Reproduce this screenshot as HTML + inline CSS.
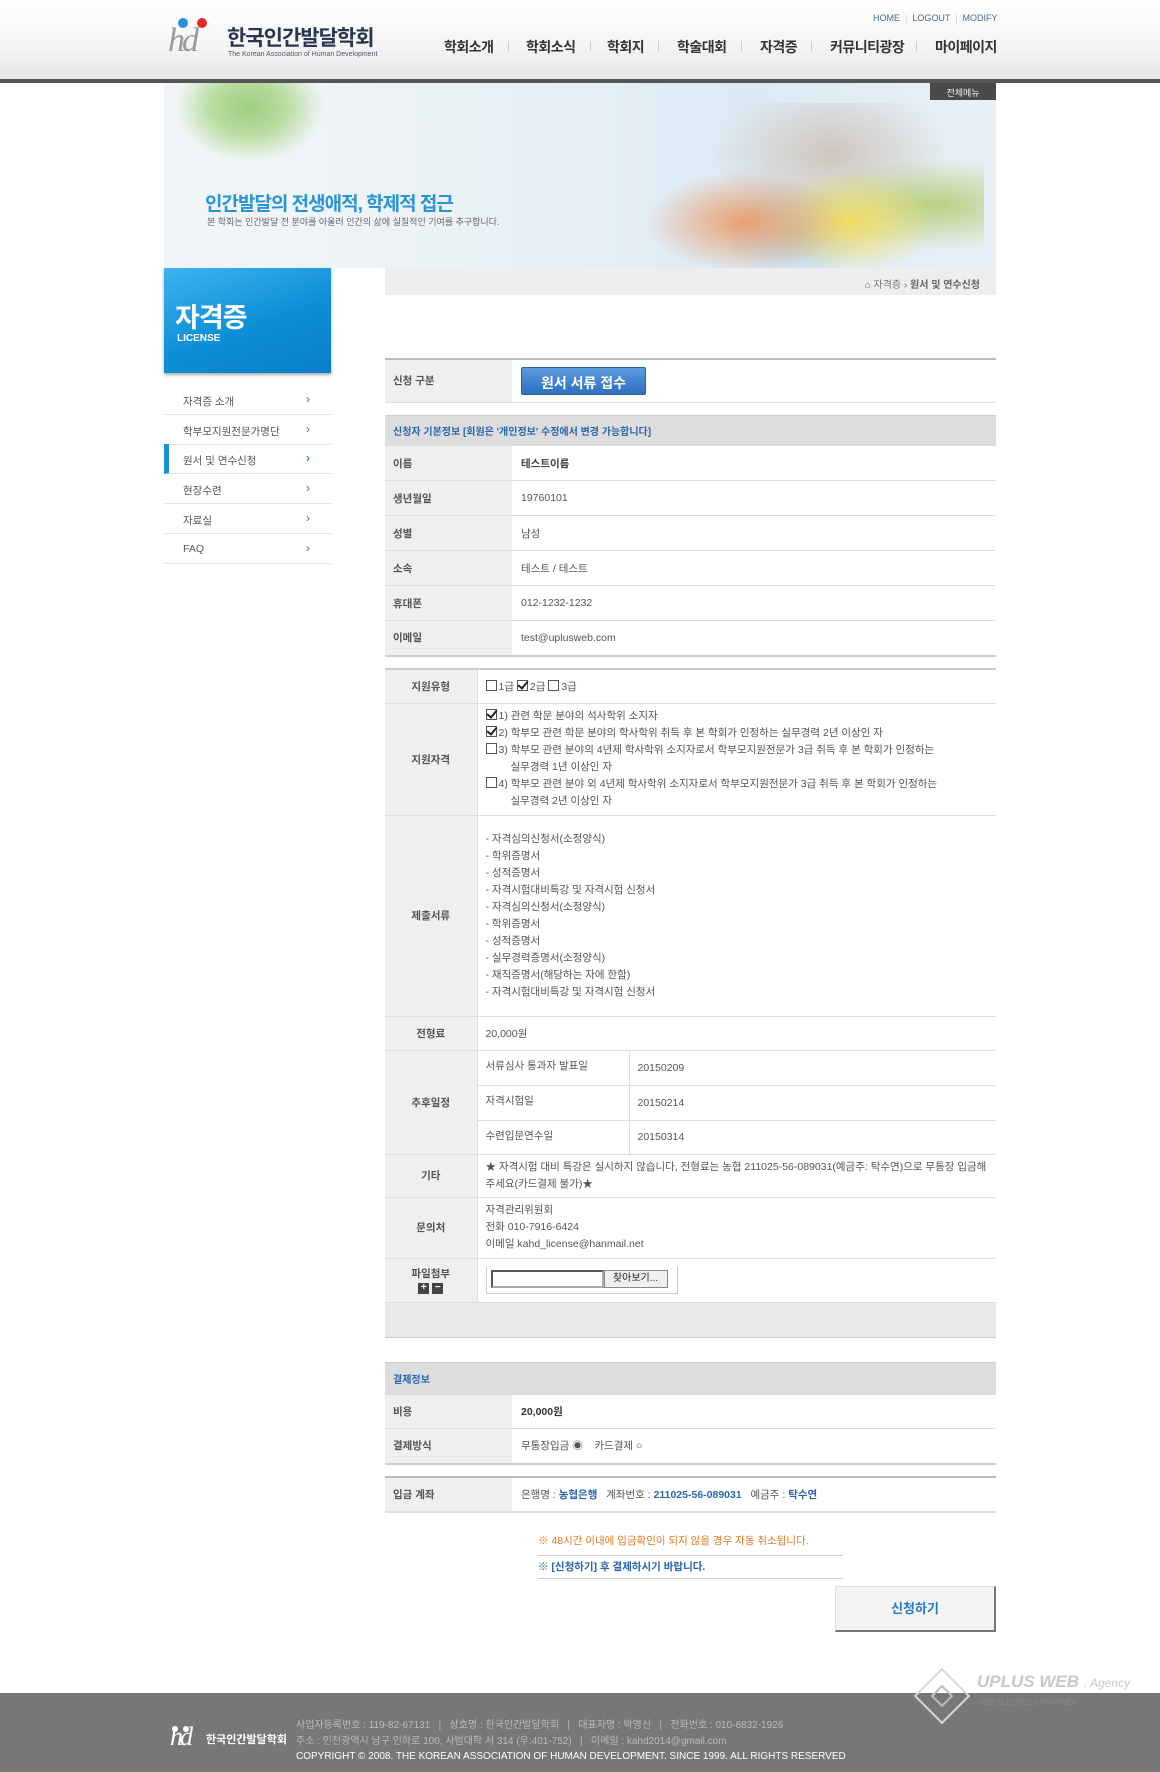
<!DOCTYPE html>
<html><head><meta charset="utf-8">
<style>
*{margin:0;padding:0;box-sizing:border-box}
body{width:1160px;height:1772px;position:relative;background:#fff;font-family:"Liberation Sans","Noto Sans CJK KR",sans-serif;font-size:10.5px;color:#555;overflow:hidden}
.a{position:absolute}
.hdr{left:0;top:0;width:1160px;height:79px;background:linear-gradient(#fff,#f4f4f4 60%,#e6e6e6)}
.line{left:0;top:79px;width:1160px;height:4px;background:#555}
.nav{top:37px;font-size:14px;color:#333;font-weight:bold;letter-spacing:-0.5px}
.sep{top:41px;width:1px;height:10px;background:#ccc}
.top{top:13px;font-size:9px;color:#4a6a9a}
.banner{left:164px;top:83px;width:832px;height:185px;background:linear-gradient(90deg,#f3f6f8,#e9f1f6 40%,#dceaf4 70%,#e8f0f5);overflow:hidden}
.side{left:164px;top:268px;width:167px;height:105px;background:linear-gradient(160deg,#3fb3f0,#0d8fd6 55%,#0a7ecb);box-shadow:0 2px 3px #aaa}
.mi{left:164px;width:167px;height:30px;border-bottom:1px solid #e3e3e3;font-size:10.5px;color:#555;padding:9px 0 0 19px}
.mi b{position:absolute;right:21px;top:7px;font-weight:normal;color:#666;font-size:12px}
.bc{left:385px;top:268px;width:611px;height:27px;background:#eee}
.lbl{background:#efefef;font-weight:bold;color:#555}
table{border-collapse:collapse;position:absolute;left:385px;width:611px}
td{border-bottom:1px solid #ddd;font-size:10.5px;color:#555;vertical-align:middle}
.t2 td.l{background:#efefef;font-weight:bold;text-align:center;width:92px;border-right:1px solid #ddd}
.t2 td{padding-left:8px}
.t2 td.l{padding-left:0}
.cb{display:inline-block;width:11px;height:11px;border:1px solid #555;vertical-align:-1px;margin-right:2px;position:relative;background:#fff}
.ck:after{content:"";position:absolute;left:2px;top:-2px;width:4px;height:8px;border:solid #222;border-width:0 2px 2px 0;transform:rotate(40deg)}
</style></head><body>
<div class="a hdr"></div>
<div class="a line"></div>
<div class="a" style="left:178px;top:18px;width:10px;height:10px;border-radius:50%;background:#2a90d8"></div>
<div class="a" style="left:197px;top:18px;width:10px;height:10px;border-radius:50%;background:#e02a2a"></div>
<div class="a" style="left:168px;top:22px;font-size:34px;font-style:italic;color:#9a9a9a;font-family:'Liberation Serif',serif;letter-spacing:-3px">hd</div>
<div class="a" style="left:227px;top:22px;font-size:21px;font-weight:bold;color:#2b3550;letter-spacing:-1px">한국인간발달학회</div>
<div class="a" style="left:228px;top:51px;font-size:7px;color:#556">The Korean Association of Human Development</div>
<div class="a top" style="left:873px">HOME &nbsp;<span style="color:#ccc">|</span>&nbsp; LOGOUT &nbsp;<span style="color:#ccc">|</span>&nbsp; MODIFY</div>
<div class="a nav" style="left:444px">학회소개</div><div class="a sep" style="left:508px"></div>
<div class="a nav" style="left:526px">학회소식</div><div class="a sep" style="left:590px"></div>
<div class="a nav" style="left:607px">학회지</div><div class="a sep" style="left:658px"></div>
<div class="a nav" style="left:677px">학술대회</div><div class="a sep" style="left:741px"></div>
<div class="a nav" style="left:760px">자격증</div><div class="a sep" style="left:811px"></div>
<div class="a nav" style="left:830px">커뮤니티광장</div><div class="a sep" style="left:916px"></div>
<div class="a nav" style="left:935px">마이페이지</div>
<div class="a banner">
 <div class="a" style="left:10px;top:0;width:150px;height:80px;background:radial-gradient(ellipse at 50% 30%,#9fcf7f 0,#b9dca0 35%,rgba(255,255,255,0) 70%)"></div>
 <div class="a" style="left:480px;top:20px;width:340px;height:170px;background:radial-gradient(ellipse at 30% 70%,#e9a070 0,rgba(233,160,112,0) 30%),radial-gradient(ellipse at 60% 70%,#f0dc60 0,rgba(240,220,96,0) 30%),radial-gradient(ellipse at 85% 60%,#b8d080 0,rgba(184,208,128,0) 32%),radial-gradient(ellipse at 45% 75%,#a9cbe6 0,rgba(169,203,230,0) 28%),radial-gradient(ellipse at 55% 30%,#cfc6bd 0,rgba(207,198,189,0) 45%)"></div>
 <div class="a" style="left:766px;top:0;width:66px;height:17px;background:#4a4a4a;color:#eee;font-size:9px;text-align:center;padding-top:3px">전체메뉴</div>
 <div class="a" style="left:41px;top:106px;font-size:19px;font-weight:bold;color:#2a95d6;letter-spacing:-1px">인간발달의 전생애적, 학제적 접근</div>
 <div class="a" style="left:43px;top:132px;font-size:9px;color:#666">본 학회는 인간발달 전 분야를 아울러 인간의 삶에 실질적인 기여를 추구합니다.</div>
</div>
<div class="a side">
 <div class="a" style="left:11px;top:28px;font-size:27px;font-weight:bold;color:#fff;letter-spacing:-1px">자격증</div>
 <div class="a" style="left:13px;top:65px;font-size:10px;font-weight:bold;color:#fff">LICENSE</div>
</div>
<div class="a mi" style="top:385px">자격증 소개<b>›</b></div>
<div class="a mi" style="top:415px">학부모지원전문가명단<b>›</b></div>
<div class="a mi" style="top:444px;border-left:5px solid #1a8ed8;padding-left:14px">원서 및 연수신청<b style="color:#1a8ed8;font-weight:bold">›</b></div>
<div class="a mi" style="top:474px">현장수련<b>›</b></div>
<div class="a mi" style="top:504px">자료실<b>›</b></div>
<div class="a mi" style="top:534px">FAQ<b>›</b></div>
<div class="a bc"><div class="a" style="right:16px;top:8px;font-size:10px;color:#777">⌂ 자격증 › <b style="color:#666">원서 및 연수신청</b></div></div>
<table style="top:358px;border-top:2px solid #bbb">
<tr style="height:43px"><td class="lbl" style="width:127px;padding-left:8px">신청 구분</td><td style="padding-left:9px"><span style="display:inline-block;width:125px;height:28px;background:linear-gradient(#5a9be0,#2e6fc0);border:1px solid #2a5fa8;border-radius:2px;color:#fff;font-size:14px;font-weight:bold;text-align:center;padding-top:5px">원서 서류 접수</span></td></tr>
</table>
<table style="top:415px">
<tr style="height:30px;background:#ddd"><td colspan="2" style="padding-left:8px;color:#2a66b0;font-weight:bold;font-size:10px;border-top:1px solid #ccc">신청자 기본정보 [회원은 '개인정보' 수정에서 변경 가능합니다]</td></tr>
<tr style="height:35px"><td class="lbl" style="width:127px;padding-left:8px">이름</td><td style="padding-left:9px;font-weight:bold;color:#444">테스트이름</td></tr>
<tr style="height:35px"><td class="lbl" style="padding-left:8px">생년월일</td><td style="padding-left:9px">19760101</td></tr>
<tr style="height:35px"><td class="lbl" style="padding-left:8px">성별</td><td style="padding-left:9px">남성</td></tr>
<tr style="height:35px"><td class="lbl" style="padding-left:8px">소속</td><td style="padding-left:9px">테스트 / 테스트</td></tr>
<tr style="height:35px"><td class="lbl" style="padding-left:8px">휴대폰</td><td style="padding-left:9px">012-1232-1232</td></tr>
<tr style="height:35px"><td class="lbl" style="padding-left:8px;border-bottom:2px solid #ccc">이메일</td><td style="padding-left:9px;border-bottom:2px solid #ccc">test@uplusweb.com</td></tr>
</table>
<table class="t2" style="top:668px;border-top:2px solid #ccc">
<tr style="height:34px"><td class="l">지원유형</td><td><span class="cb"></span>1급 <span class="cb ck"></span>2급 <span class="cb"></span>3급</td></tr>
<tr style="height:112px"><td class="l">지원자격</td><td style="line-height:17px">
<span class="cb ck"></span>1) 관련 학문 분야의 석사학위 소지자<br>
<span class="cb ck"></span>2) 학부모 관련 학문 분야의 학사학위 취득 후 본 학회가 인정하는 실무경력 2년 이상인 자<br>
<span class="cb"></span>3) 학부모 관련 분야의 4년제 학사학위 소지자로서 학부모지원전문가 3급 취득 후 본 학회가 인정하는<br><span style="padding-left:25px">실무경력 1년 이상인 자</span><br>
<span class="cb"></span>4) 학부모 관련 분야 외 4년제 학사학위 소지자로서 학부모지원전문가 3급 취득 후 본 학회가 인정하는<br><span style="padding-left:25px">실무경력 2년 이상인 자</span></td></tr>
<tr style="height:201px"><td class="l">제출서류</td><td style="line-height:17px">- 자격심의신청서(소정양식)<br>- 학위증명서<br>- 성적증명서<br>- 자격시험대비특강 및 자격시험 신청서<br>- 자격심의신청서(소정양식)<br>- 학위증명서<br>- 성적증명서<br>- 실무경력증명서(소정양식)<br>- 재직증명서(해당하는 자에 한함)<br>- 자격시험대비특강 및 자격시험 신청서</td></tr>
<tr style="height:34px"><td class="l">전형료</td><td>20,000원</td></tr>
<tr style="height:104px"><td class="l">추후일정</td><td style="padding:0"><div style="display:flex;flex-direction:column">
<div style="display:flex;height:35px;border-bottom:1px solid #ddd;align-items:center"><div style="width:152px;padding-left:8px;border-right:1px solid #ddd;height:35px;line-height:33px">서류심사 통과자 발표일</div><div style="padding-left:8px">20150209</div></div>
<div style="display:flex;height:35px;border-bottom:1px solid #ddd;align-items:center"><div style="width:152px;padding-left:8px;border-right:1px solid #ddd;height:35px;line-height:33px">자격시험일</div><div style="padding-left:8px">20150214</div></div>
<div style="display:flex;height:33px;align-items:center"><div style="width:152px;padding-left:8px;border-right:1px solid #ddd;height:33px;line-height:31px">수련입문연수일</div><div style="padding-left:8px">20150314</div></div></div></td></tr>
<tr style="height:43px"><td class="l">기타</td><td style="line-height:17px">★ 자격시험 대비 특강은 실시하지 않습니다, 전형료는 농협 211025-56-089031(예금주: 탁수연)으로 무통장 입금해 주세요(카드결제 불가)★</td></tr>
<tr style="height:61px"><td class="l">문의처</td><td style="line-height:17px">자격관리위원회<br>전화 010-7916-6424<br>이메일 kahd_license@hanmail.net</td></tr>
<tr style="height:44px"><td class="l">파일첨부<br><span style="display:inline-block;width:11px;height:11px;background:#444;color:#fff;font-size:10px;line-height:10px">+</span> <span style="display:inline-block;width:11px;height:11px;background:#444;color:#fff;font-size:10px;line-height:10px">−</span></td><td><div style="width:192px;height:28px;border:1px solid #ccc;border-top:none;padding:4px"><span style="display:inline-block;width:113px;height:18px;border:2px inset #aaa;vertical-align:middle"></span><span style="display:inline-block;width:64px;height:18px;border:1px solid #888;background:#f0f0f0;font-size:10px;text-align:center;line-height:16px;vertical-align:middle;color:#222">찾아보기...</span></div></td></tr>
<tr style="height:35px;background:#e8e8e8"><td colspan="2" style="border-bottom:1px solid #ccc"></td></tr>
</table>
<table style="top:1362px">
<tr style="height:32px;background:#ddd"><td colspan="2" style="padding-left:8px;color:#2a66b0;font-weight:bold;font-size:10px;border-top:1px solid #ccc">결제정보</td></tr>
<tr style="height:34px"><td class="lbl" style="width:127px;padding-left:8px">비용</td><td style="padding-left:9px;font-weight:bold;color:#333">20,000원</td></tr>
<tr style="height:35px"><td class="lbl" style="padding-left:8px;border-bottom:2px solid #ccc">결제방식</td><td style="padding-left:9px;border-bottom:2px solid #ccc">무통장입금 ◉ &nbsp;&nbsp; 카드결제 ○</td></tr>
</table>
<table style="top:1476px;border-top:2px solid #bbb">
<tr style="height:35px"><td class="lbl" style="width:127px;padding-left:8px;border-bottom:2px solid #ddd">입금 계좌</td><td style="padding-left:9px;border-bottom:2px solid #ddd">은행명 : <b style="color:#2a66b0">농협은행</b> &nbsp; 계좌번호 : <b style="color:#2a66b0">211025-56-089031</b> &nbsp; 예금주 : <b style="color:#2a66b0">탁수연</b></td></tr>
</table>
<div class="a" style="left:538px;top:1533px;width:305px;height:23px;border-bottom:1px solid #ccc;color:#e07a20;font-size:10.5px">※ 48시간 이내에 입금확인이 되지 않을 경우 자동 취소됩니다.</div>
<div class="a" style="left:538px;top:1559px;width:305px;height:20px;border-bottom:1px solid #ccc;color:#2a66b0;font-size:10.5px;font-weight:bold">※ [신청하기] 후 결제하시기 바랍니다.</div>
<div class="a" style="left:835px;top:1586px;width:161px;height:46px;background:#f3f3f3;border:1px solid #ddd;border-right:2px solid #777;border-bottom:2px solid #777;color:#2a7ac0;font-weight:bold;font-size:13px;text-align:center;line-height:44px">신청하기</div>
<div class="a" style="left:0;top:1693px;width:1160px;height:79px;background:#777"></div>
<div class="a" style="left:922px;top:1676px;width:40px;height:40px;border:2px solid #d8d8d8;transform:rotate(45deg)"></div>
<div class="a" style="left:934px;top:1688px;width:16px;height:16px;border:2px solid #bbb;transform:rotate(45deg)"></div>
<div class="a" style="left:977px;top:1672px;font-size:17px;font-weight:bold;color:#c8c8c8;font-style:italic">UPLUS WEB <span style="font-size:12px;font-weight:normal">. Agency</span></div>
<div class="a" style="left:977px;top:1698px;font-size:8px;color:#888">WEB BUSINESS PARTNER</div>
<div class="a" style="left:172px;top:1726px;width:6px;height:6px;border-radius:50%;background:#fff"></div>
<div class="a" style="left:183px;top:1726px;width:6px;height:6px;border-radius:50%;background:#fff"></div>
<div class="a" style="left:170px;top:1722px;font-size:26px;font-style:italic;color:#fff;font-family:'Liberation Serif',serif;letter-spacing:-3px">hd</div>
<div class="a" style="left:206px;top:1731px;font-size:11px;font-weight:bold;color:#fff">한국인간발달학회</div>
<div class="a" style="left:296px;top:1718px;font-size:10px;color:#bbb;line-height:15.5px">사업자등록번호 : 119-82-67131 &nbsp; | &nbsp; 상호명 : 한국인간발달학회 &nbsp; | &nbsp; 대표자명 : 박영신 &nbsp; | &nbsp; 전화번호 : 010-6832-1926<br>주소 : 인천광역시 남구 인하로 100, 사범대학 서 314 (우:401-752) &nbsp; | &nbsp; 이메일 : kahd2014@gmail.com<br><span style="color:#fff">COPYRIGHT © 2008. THE KOREAN ASSOCIATION OF HUMAN DEVELOPMENT. SINCE 1999. ALL RIGHTS RESERVED</span></div>
</body></html>
